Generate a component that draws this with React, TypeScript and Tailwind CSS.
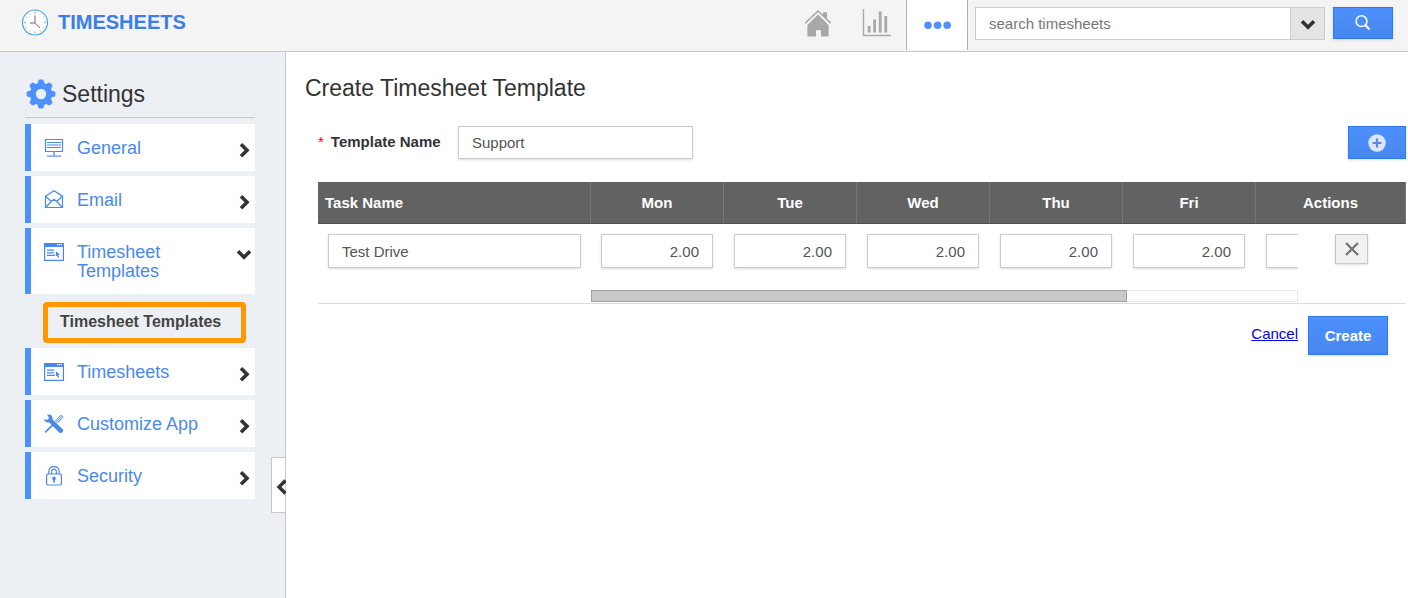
import { useState } from "react"
import type { ReactNode } from "react"

const days = ["Mon", "Tue", "Wed", "Thu", "Fri"]

function ClockLogo() {
  return (
    <svg viewBox="0 0 28 28" className="h-7 w-7" fill="none" aria-hidden="true">
      <circle cx="14" cy="14.5" r="12.5" fill="#fdfdfd" stroke="#4ba3d8" strokeWidth="1.2" />
      <g stroke="#b9b9b9" strokeWidth="1.4">
        <path d="M14 3.500v2M14 23.500v2M3 14.500h2M23 14.500h2" />
        <path d="M8.2 5.500l.6 1M19.8 5.500l-.6 1M5 8.700l1 .6M23 8.700l-1 .6M5 20.300l1-.6M23 20.300l-1-.6M8.2 23.500l.6-1M19.8 23.500l-.6-1" strokeWidth="1" />
      </g>
      <path d="M14 7.500v7.500H9" stroke="#9a9a9a" strokeWidth="1.5" />
      <path d="M14 15l5 5" stroke="#e0577c" strokeWidth="1" />
    </svg>
  )
}

function HomeIcon() {
  return (
    <svg viewBox="0 0 28 28" className="h-7 w-7" aria-hidden="true">
      <path d="M1.2 14.2L14 2l12.8 12.2" fill="none" stroke="#a8a8a8" strokeWidth="1.6" />
      <path d="M19 3.2h4v7.2l-4-3.8z" fill="#a8a8a8" />
      <path d="M14 5.6L24.6 16v11.4H17v-6.2h-5v6.2H3.4V16z" fill="#a8a8a8" />
    </svg>
  )
}

function ChartIcon() {
  return (
    <svg viewBox="0 0 30 30" className="h-[30px] w-[30px]" fill="none" stroke="#a8a8a8" aria-hidden="true">
      <path d="M1.5 1v26.5H29" strokeWidth="1.4" />
      <path d="M7.2 18v6.500M12.6 11.500v13M18.2 3.500v21M23.8 8v16.500" strokeWidth="2.8" />
    </svg>
  )
}

function GearIcon() {
  return (
    <svg viewBox="0 0 30 30" className="h-[30px] w-[30px]" aria-hidden="true">
      <g fill="#4d90fe">
        {[0, 45, 90, 135].map((angle) => (
          <path
            key={angle}
            d="M11 6L12.4 1.6Q12.7.6 13.7.6h2.6q1 0 1.3 1L19 6v18l-1.4 4.4q-.3 1-1.3 1h-2.6q-1 0-1.3-1L11 24z"
            transform={`rotate(${angle} 15 15)`}
          />
        ))}
        <circle cx="15" cy="15" r="11" />
      </g>
      <circle cx="15" cy="15" r="5.2" fill="#eceff4" />
    </svg>
  )
}

function Chevron({ direction }: { direction: "right" | "down" }) {
  const paths = {
    right: "M9 6.300l6 6-6 6",
    down: "M6 9.200l6 6 6-6",
  }
  return (
    <svg viewBox="0 0 24 24" className="h-6 w-6 shrink-0" fill="none" stroke="#333" strokeWidth="3.6" aria-hidden="true">
      <path d={paths[direction]} />
    </svg>
  )
}

function NavIcon({ children }: { children: ReactNode }) {
  return (
    <svg viewBox="0 0 20 20" className="h-5 w-5 shrink-0" fill="none" stroke="#4a89ea" strokeWidth="1.2" aria-hidden="true">
      {children}
    </svg>
  )
}

function MonitorIcon() {
  return (
    <NavIcon>
      <path d="M1.5 1.5h17v12h-17z" />
      <path d="M3 4.500h14M3 7h14M3 9.500h14" />
      <path d="M10 13.5V18" stroke="#86b0f2" strokeWidth="2" />
      <path d="M3 18.2h14" stroke="#86b0f2" strokeWidth="1.8" />
    </NavIcon>
  )
}

function EnvelopeIcon() {
  return (
    <NavIcon>
      <path d="M1.5 6.2L10 .8l8.5 5.4v11.3h-17z" />
      <path d="M1.5 6.2l5.8 5.3 2.7-2.2 2.7 2.2 5.8-5.3M1.5 17.5l5.8-6M18.5 17.5l-5.8-6" strokeWidth="1.3" />
    </NavIcon>
  )
}

function WindowIcon() {
  return (
    <NavIcon>
      <path d="M.6 1.6h18.8v16.8H.6z" />
      <path d="M0 1h20v4H0z" fill="#4a89ea" stroke="none" />
      <path d="M13 2.6h5" stroke="#fff" strokeDasharray="1.2 .7" />
      <path d="M3 8.2h7M3 10.8h7M3 13.4h8" strokeWidth="1.3" />
      <path d="M11.8 9.2l4 3.4-1.6.4 1 2.4-1.1.5-1-2.4-1.1 1z" fill="#4a89ea" stroke="none" />
    </NavIcon>
  )
}

function ToolsIcon() {
  return (
    <NavIcon>
      <path d="M1.2 18.4L9 10.600" strokeWidth="1.6" />
      <path d="M11.6 6.800L17 1.200l2 2-5.400 5.600zM13.200 7.200L17.800 2.400" strokeWidth="1" />
      <path
        d="M.4 4.800L2.400 6 4.400 5.200 4.800 3.200 3 .8Q6-.4 7.800 1.800 8.800 3.400 8.400 5.200L18.800 15.200q1 1.600-.4 3-1.600 1.400-3.200.2L5.200 8.400Q3 8.800 1.400 7.600.2 6.400.4 4.800z"
        fill="#4a89ea"
        stroke="none"
      />
    </NavIcon>
  )
}

function LockIcon() {
  return (
    <NavIcon>
      <path d="M4.800 8V5.600Q5 .6 10 .6t5.200 5V8M7.600 8V5.800Q7.800 3.200 10 3.200t2.400 2.600V8" />
      <rect x="2.600" y="8" width="14.800" height="11" rx="1.500" />
      <circle cx="10" cy="12.400" r="1.800" fill="#4a89ea" stroke="none" />
      <path d="M10 12.500v4" strokeWidth="1.800" />
    </NavIcon>
  )
}

const navItems = [
  { label: "General", icon: <MonitorIcon /> },
  { label: "Email", icon: <EnvelopeIcon /> },
  { label: "Timesheet Templates", icon: <WindowIcon />, children: ["Timesheet Templates"] },
  { label: "Timesheets", icon: <WindowIcon /> },
  { label: "Customize App", icon: <ToolsIcon /> },
  { label: "Security", icon: <LockIcon /> },
]

const fieldClass = "border border-[#ccc] bg-white px-[13px] text-[15px] text-[#555] shadow-sm outline-none"
const primaryClass = "border border-[#3079ed] bg-linear-to-b from-[#4d90fe] to-[#4787ed] text-white shadow-sm"

function Header() {
  return (
    <header className="flex h-[52px] items-start justify-between border-b border-[#c8c8c8] bg-[#f4f4f4] pr-[15px] pl-[21px]">
      <a href="#" className="flex h-11 items-center gap-[9px] text-xl font-bold text-[#3b7de9]">
        <ClockLogo />
        <span>TIMESHEETS</span>
      </a>

      <div className="flex items-start">
        <nav className="flex h-[50px] items-stretch">
          <a href="#home" aria-label="Home" className="flex w-[60px] justify-center pt-[9px]">
            <HomeIcon />
          </a>
          <a href="#reports" aria-label="Reports" className="flex w-[58px] justify-center pt-2">
            <ChartIcon />
          </a>
          <a
            href="#more"
            aria-label="More"
            className="flex w-[62px] items-center justify-center border-x border-[#b0b0b0] bg-white"
          >
            <svg viewBox="0 0 28 8" className="h-2 w-7" fill="#4d90fe" aria-hidden="true">
              <circle cx="5" cy="4.200" r="3.800" />
              <circle cx="14.600" cy="4.200" r="3.800" />
              <circle cx="24.200" cy="4.200" r="3.800" />
            </svg>
          </a>
        </nav>

        <form className="flex pt-[7px] pl-[7px]" onSubmit={(e) => e.preventDefault()}>
          <input
            type="text"
            aria-label="Search timesheets"
            placeholder="search timesheets"
            className="h-[33px] w-[315px] border border-r-0 border-[#ccc] bg-white px-[13px] text-[15px] outline-none placeholder:text-[#777]"
          />
          <button
            type="button"
            aria-label="Search options"
            className="flex h-[33px] w-[35px] items-center justify-center border border-[#ccc] bg-[#e4e4e4]"
          >
            <Chevron direction="down" />
          </button>
          <button type="submit" aria-label="Search" className={`ml-2 flex h-8 w-[60px] justify-center pt-[6px] ${primaryClass}`}>
            <svg viewBox="0 0 18 18" className="h-[18px] w-[18px]" fill="none" stroke="#fff" strokeWidth="1.500" aria-hidden="true">
              <circle cx="7.500" cy="7.200" r="5.400" />
              <path d="M11.300 11l4.200 4.500" strokeWidth="2" />
            </svg>
          </button>
        </form>
      </div>
    </header>
  )
}

function Sidebar() {
  return (
    <aside className="relative w-[286px] shrink-0 border-r border-[#c8c8c8] bg-[#eceff4] pt-[27px] pr-[30px] pl-[25px]">
      <h2 className="flex h-[39px] items-start gap-[6px] border-b border-[#c8c8c8] pl-px text-[23px] leading-[30px] text-[#333]">
        <GearIcon />
        Settings
      </h2>

      <ul className="mt-[6px] flex flex-col gap-[5px]">
        {navItems.map((item) => (
          <li key={item.label}>
            <a
              href="#"
              className="flex items-start border-l-[6px] border-[#4d90fe] bg-white pt-[14px] pb-[13px] pl-[13px] text-lg leading-[19px] text-[#4a89ea]"
            >
              {item.icon}
              <span className="ml-[13px] w-[130px] pt-px">{item.label}</span>
              <span className="-mr-px ml-auto h-[19px]">
                <Chevron direction={item.children ? "down" : "right"} />
              </span>
            </a>
            {item.children?.map((child) => (
              <a
                key={child}
                href="#"
                className="mt-2 mr-[9px] ml-[18px] block h-[41px] rounded border-[5px] border-[#ff9800] pl-3 text-base leading-[29px] font-bold text-[#444]"
              >
                {child}
              </a>
            ))}
          </li>
        ))}
      </ul>

      <button
        type="button"
        aria-label="Collapse sidebar"
        className="absolute top-[405px] right-0 flex h-14 w-[14px] items-center justify-end border border-r-0 border-[#c8c8c8] bg-white pt-1"
      >
        <svg viewBox="0 0 10 16" className="-mr-px h-4 w-[10px] shrink-0" fill="none" stroke="#333" strokeWidth="3.400" aria-hidden="true">
          <path d="M9.500 1.500L3 8l6.500 6.500" />
        </svg>
      </button>
    </aside>
  )
}

function TaskTable() {
  const thClass = "border-r border-b border-r-[#777] border-b-[#4f4f4f] pt-[2px]"

  return (
    <table className="mt-[23px] w-full table-fixed border-separate border-spacing-0 border-b border-[#ddd] text-[15px]">
      <colgroup>
        <col />
        {days.map((day) => (
          <col key={day} className="w-[133px]" />
        ))}
        <col className="w-[42px]" />
        <col className="w-[108px]" />
      </colgroup>
      <thead>
        <tr className="h-[42px] bg-[#626262] text-white">
          <th className={`pl-[7px] text-left ${thClass}`}>Task Name</th>
          {days.map((day) => (
            <th key={day} className={thClass}>
              {day}
            </th>
          ))}
          <th colSpan={2} className={thClass}>
            Actions
          </th>
        </tr>
      </thead>
      <tbody>
        <tr className="h-[66px] align-top">
          <td className="px-[10px] pt-[10px]">
            <input type="text" aria-label="Task Name" defaultValue="Test Drive" className={`block h-[34px] w-full ${fieldClass}`} />
          </td>
          {days.map((day) => (
            <td key={day} className="pt-[10px] pr-[11px] pl-[10px]">
              <input type="text" aria-label={day} defaultValue="2.00" className={`block h-[34px] w-full text-right ${fieldClass}`} />
            </td>
          ))}
          <td className="overflow-hidden pt-[10px] pl-[10px]">
            <input type="text" aria-label="Sat" className={`block h-[34px] w-[112px] ${fieldClass}`} />
          </td>
          <td className="pt-[10px]">
            <button
              type="button"
              aria-label="Remove task"
              className="mx-auto flex h-[30px] w-[33px] items-center justify-center border border-[#c8c8c8] bg-[#f1f1f1] shadow-sm"
            >
              <svg viewBox="0 0 14 14" className="h-[14px] w-[14px]" stroke="#777" strokeWidth="2.400" aria-hidden="true">
                <path d="M1 1l12 12M13 1L1 13" />
              </svg>
            </button>
          </td>
        </tr>
        <tr>
          <td />
          <td colSpan={6} className="pb-px">
            <div className="h-3 border border-[#e8e8e8]">
              <div className="-m-px h-3 w-[76%] border border-[#a0a0a0] bg-[#c9c9c9]" />
            </div>
          </td>
          <td />
        </tr>
      </tbody>
    </table>
  )
}

export default function App() {
  const [name, setName] = useState("Support")

  return (
    <div className="flex min-h-screen flex-col bg-white font-['Liberation_Sans',Arial,sans-serif] text-[#333]">
      <Header />
      <div className="flex flex-1">
        <Sidebar />
        <main className="min-w-0 flex-1 pt-[22px] pr-[2px] pl-[19px]">
          <h1 className="text-[23px] leading-7">Create Timesheet Template</h1>

          <form className="mt-6 pl-[13px]" onSubmit={(e) => e.preventDefault()}>
            <div className="flex h-[33px] items-center">
              <label htmlFor="template-name" className="w-[140px] text-[15px] font-bold">
                <span className="mr-[7px] font-normal text-[#f00]">*</span>
                Template Name
              </label>
              <input
                id="template-name"
                type="text"
                value={name}
                onChange={(e) => setName(e.target.value)}
                className={`h-[33px] w-[235px] ${fieldClass}`}
              />
              <button type="button" aria-label="Add task" className={`ml-auto flex h-[33px] w-[58px] items-center justify-center ${primaryClass}`}>
                <svg viewBox="0 0 18 18" className="h-[18px] w-[18px]" aria-hidden="true">
                  <circle cx="9" cy="9" r="8.700" fill="#dbe6fb" />
                  <path d="M9 4.500v9M4.500 9h9" stroke="#5f88d8" strokeWidth="2.200" />
                </svg>
              </button>
            </div>

            <TaskTable />

            <div className="flex items-start justify-end gap-[10px] pt-3 pr-[18px] text-[15px]">
              <a href="#" className="leading-9 text-[#0000ee] underline">
                Cancel
              </a>
              <button type="submit" className={`h-[39px] w-20 pt-[2px] font-bold ${primaryClass}`}>
                Create
              </button>
            </div>
          </form>
        </main>
      </div>
    </div>
  )
}
